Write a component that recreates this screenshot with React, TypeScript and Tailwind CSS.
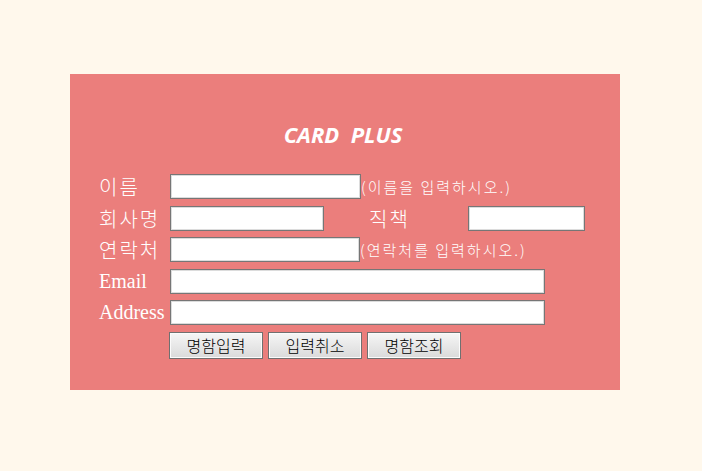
const inputCls =
  'h-[25px] bg-white border border-[#767676] shadow-[inset_0_0_0_1px_#dcdcdc] outline-none'

const labelKo =
  "w-[71px] text-[20px] leading-[25px] tracking-[2px] text-white font-light font-['Noto_Sans_CJK_KR',sans-serif]"
const labelEn = "w-[71px] text-[20px] leading-[25px] text-white font-['Liberation_Serif',serif]"
const hintCls =
  "text-[15px] leading-[25px] tracking-[2px] text-white font-light font-['Noto_Sans_CJK_KR',sans-serif]"

function Btn({ children }: { children: React.ReactNode }) {
  return (
    <button className="h-[27px] w-[94px] border border-[#707070] bg-gradient-to-b from-[#f6f6f6] to-[#dadada] shadow-[inset_0_0_0_1px_#fbfbfb] text-[16px] text-black font-light font-['Noto_Sans_CJK_KR',sans-serif]">
      {children}
    </button>
  )
}

export default function App() {
  return (
    <div className="w-[702px] h-[471px] bg-[#fff8ec] pt-[74px] pl-[70px]">
      <div className="w-[550px] h-[316px] bg-[#eb7e7c] pl-[29px]">
        <div className="pt-[44px] h-[100px] pr-[29px] text-center">
          <span className="whitespace-pre text-[22px] font-bold italic text-white font-['Open_Sans',sans-serif] ml-[-4px]">
            CARD  PLUS
          </span>
        </div>
        <div className="flex flex-col gap-[6.5px]">
          <div className="flex items-center">
            <span className={labelKo}>이름</span>
            <input className={`${inputCls} w-[191px]`} />
            <span className={hintCls}>(이름을 입력하시오.)</span>
          </div>
          <div className="flex items-center">
            <span className={labelKo}>회사명</span>
            <input className={`${inputCls} w-[154px]`} />
            <span className={`${labelKo} ml-[45px] w-[99px]`}>직책</span>
            <input className={`${inputCls} w-[117px]`} />
          </div>
          <div className="flex items-center">
            <span className={labelKo}>연락처</span>
            <input className={`${inputCls} w-[190px]`} />
            <span className={hintCls}>(연락처를 입력하시오.)</span>
          </div>
          <div className="flex items-center">
            <span className={labelEn}>Email</span>
            <input className={`${inputCls} w-[375px]`} />
          </div>
          <div className="flex items-center">
            <span className={labelEn}>Address</span>
            <input className={`${inputCls} w-[375px]`} />
          </div>
          <div className="flex items-center gap-[5px] pl-[70px]">
            <Btn>명함입력</Btn>
            <Btn>입력취소</Btn>
            <Btn>명함조회</Btn>
          </div>
        </div>
      </div>
    </div>
  )
}
